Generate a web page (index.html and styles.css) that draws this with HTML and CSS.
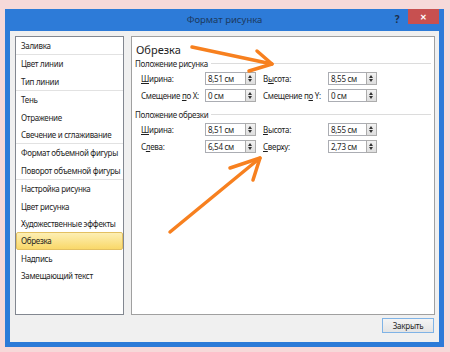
FILE: index.html
```html
<!DOCTYPE html>
<html>
<head>
<meta charset="utf-8" />
<title>Формат рисунка</title>
<link rel="stylesheet" href="styles.css">
</head>
<body>
<div class="window">
	<div class="titlebar">
		<span class="title">Формат рисунка</span>
		<span class="controls">
			<span class="help">?</span>
			<span class="close">&#x2715;</span>
		</span>
	</div>
	<div class="body">
		<div class="main">
			<ul class="nav">
				<li>Заливка</li>
				<li class="sep"></li>
				<li>Цвет линии</li>
				<li>Тип линии</li>
				<li class="sep"></li>
				<li>Тень</li>
				<li>Отражение</li>
				<li>Свечение и сглаживание</li>
				<li class="sep"></li>
				<li>Формат объемной фигуры</li>
				<li>Поворот объемной фигуры</li>
				<li class="sep"></li>
				<li>Настройка рисунка</li>
				<li>Цвет рисунка</li>
				<li>Художественные эффекты</li>
				<li class="active">Обрезка</li>
				<li>Надпись</li>
				<li>Замещающий текст</li>
			</ul>
			<div class="panel">
				<h2>Обрезка</h2>
				<div class="group">Положение рисунка</div>
				<div class="fields">
					<label><u>Ш</u>ирина:</label>
					<span class="spin"><span class="val">8,51 см</span><span class="btns"></span></span>
					<label class="right">В<u>ы</u>сота:</label>
					<span class="spin"><span class="val">8,55 см</span><span class="btns"></span></span>
					<label>Смещение <u>п</u>о X:</label>
					<span class="spin"><span class="val">0 см</span><span class="btns"></span></span>
					<label class="right">Смещение п<u>о</u> Y:</label>
					<span class="spin"><span class="val">0 см</span><span class="btns"></span></span>
				</div>
				<div class="group second">Положение обрезки</div>
				<div class="fields">
					<label><u>Ш</u>ирина:</label>
					<span class="spin"><span class="val">8,51 см</span><span class="btns"></span></span>
					<label class="right"><u>В</u>ысота:</label>
					<span class="spin"><span class="val">8,55 см</span><span class="btns"></span></span>
					<label>С<u>л</u>ева:</label>
					<span class="spin"><span class="val">6,54 см</span><span class="btns"></span></span>
					<label class="right"><u>С</u>верху:</label>
					<span class="spin"><span class="val">2,73 см</span><span class="btns"></span></span>
				</div>
			</div>
		</div>
		<div class="footer">
			<button class="btn">Закрыть</button>
		</div>
	</div>
</div>
<svg class="marks" width="450" height="352" viewBox="0 0 450 352">
	<g fill="none" stroke="#f7801f" stroke-width="3.5" stroke-linecap="round" stroke-linejoin="round">
		<path d="M192 47 L272 64"/>
		<path d="M257 51 L272 64 L249 71"/>
		<path d="M170 232 L260 158"/>
		<path d="M230 168 L260 158 L253 180"/>
	</g>
</svg>
</body>
</html>
```

FILE: styles.css
```css
body{
	margin:0;
	background:#f6d9d9;
	font-family:"Noto Sans","Open Sans",sans-serif;
	font-size:8px;
	letter-spacing:-0.3px;
	color:#1e1e1e;
}
.window{
	margin:9px 0 0 5px;
	width:439px;
	height:338px;
	box-sizing:border-box;
	background:#2d7bd8;
	padding:0 5px 5px;
	display:flex;
	flex-direction:column;
}
.titlebar{
	height:22px;
	flex:none;
	display:grid;
	grid-template-columns:1fr auto 1fr;
}
.title{
	grid-column:2;
	line-height:22px;
	font-size:9.5px;
	letter-spacing:0;
	color:#1c3a60;
}
.controls{
	grid-column:3;
	justify-self:end;
	display:flex;
	align-items:flex-start;
}
.help{
	width:10px;
	margin-right:6px;
	line-height:20px;
	font-weight:bold;
	font-size:10px;
	color:#1c2e48;
	text-align:center;
}
.close{
	width:31px;
	height:15px;
	background:#c75050;
	color:#fff;
	font-size:8px;
	font-weight:bold;
	line-height:15px;
	text-align:center;
}
.body{
	flex:1;
	background:#f0f0f0;
	padding:5px 4px 0 5px;
	display:flex;
	flex-direction:column;
}
.main{
	display:flex;
	gap:7px;
	height:279px;
}
.nav{
	width:109px;
	flex:none;
	box-sizing:border-box;
	margin:0;
	padding:0;
	list-style:none;
	background:#fff;
	border:1px solid #828790;
}
.nav li{
	height:17.4px;
	line-height:17.4px;
	padding-left:5px;
	box-sizing:border-box;
	white-space:nowrap;
}
.nav li.sep{
	height:1px;
	padding:0;
	background:#e2e2e2;
}
.nav li.active{
	border:1px solid #e3c061;
	border-radius:2px;
	padding-left:4px;
	line-height:15.4px;
	background:linear-gradient(#fdefb4,#f9d869);
}
.panel{
	flex:1;
	background:#fff;
	border:1px solid #a0a0a0;
}
.panel h2{
	margin:0;
	padding:4px 0 0 4px;
	font-size:11px;
	font-weight:normal;
	letter-spacing:0;
	line-height:17px;
}
.group{
	display:flex;
	align-items:center;
	gap:3px;
	margin-right:3px;
	padding-left:3px;
	line-height:11px;
}
.group::after{
	content:"";
	flex:1;
	height:1px;
	background:#dcdcdc;
}
.group.second{
	margin-top:5px;
}
.fields{
	display:grid;
	grid-template-columns:64px 51px 72px 49px;
	grid-auto-rows:17px;
	align-items:center;
	padding:1px 0 0 9px;
}
.fields label{
	white-space:nowrap;
}
.fields label.right{
	padding-left:7px;
}
.spin{
	display:flex;
	height:13px;
}
.val{
	flex:1;
	box-sizing:border-box;
	border:1px solid #abadb3;
	border-right:none;
	background:#fff;
	padding-left:2px;
	line-height:11px;
}
.btns{
	width:11px;
	flex:none;
	box-sizing:border-box;
	border:1px solid #acacac;
	background:linear-gradient(#f2f2f2,#dedede);
	position:relative;
}
.btns::before,.btns::after{
	content:"";
	position:absolute;
	left:2px;
	border-left:2.5px solid transparent;
	border-right:2.5px solid transparent;
}
.btns::before{
	top:2px;
	border-bottom:3px solid #333;
}
.btns::after{
	bottom:2px;
	border-top:3px solid #333;
}
.footer{
	display:flex;
	justify-content:flex-end;
	margin-top:3px;
	padding-right:1px;
}
.btn{
	width:52px;
	height:15px;
	padding:0;
	font-family:inherit;
	font-size:8px;
	letter-spacing:-0.25px;
	color:#1e1e1e;
	border:1px solid #7fb3e6;
	background:linear-gradient(#f4f4f4,#e4e4e4);
}
.marks{
	position:absolute;
	top:0;
	left:0;
	pointer-events:none;
}
```
